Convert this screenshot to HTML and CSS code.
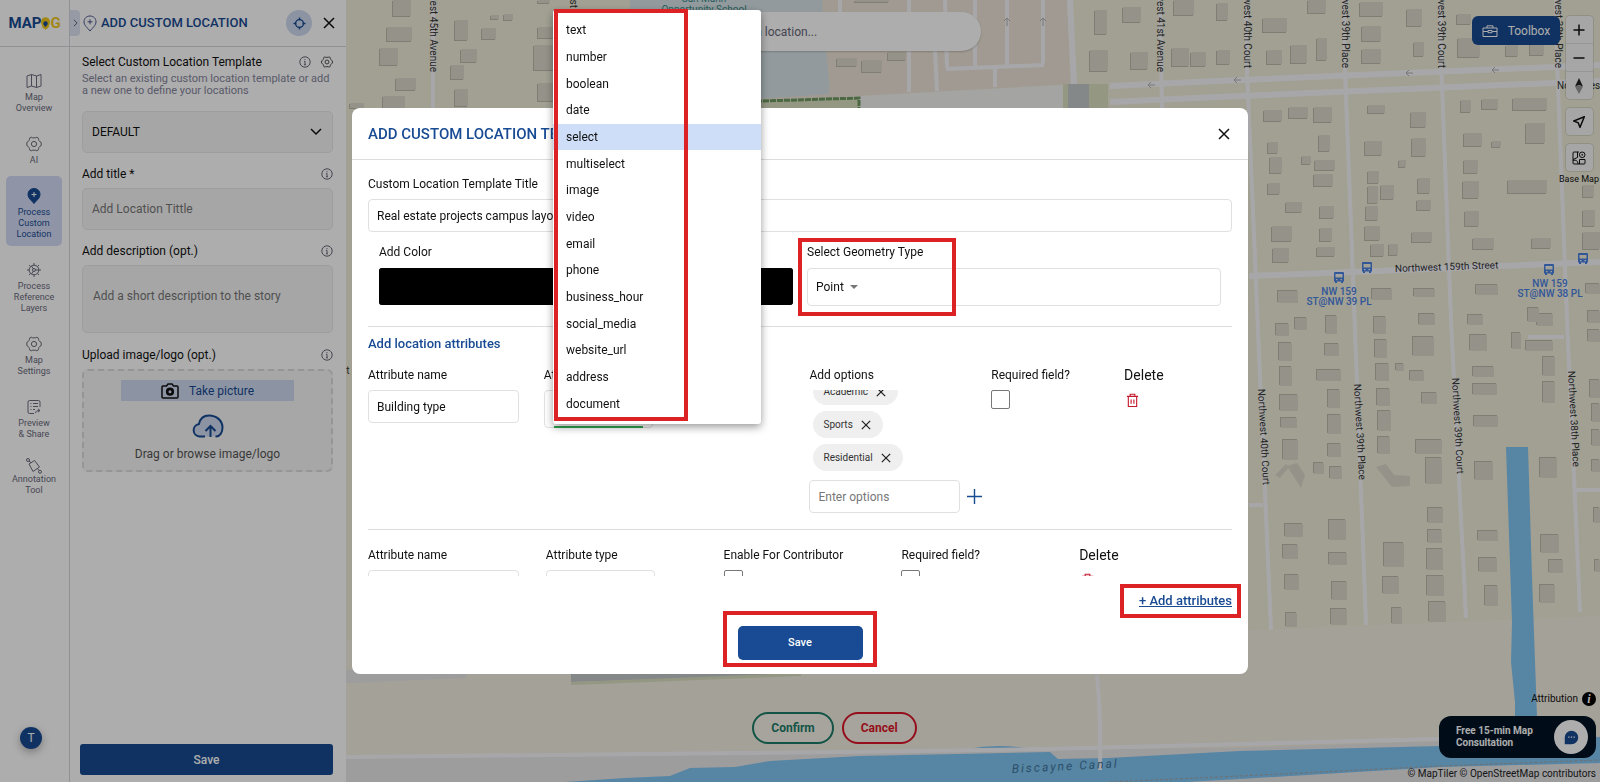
FILE: index.html
```html
<!DOCTYPE html>
<html lang="en">
<head>
  <meta charset="UTF-8">
  <meta name="viewport" content="width=device-width, initial-scale=1.0">
  <title>MAPOG - Add Custom Location</title>
  <link rel="stylesheet" href="styles.css">
</head>
<body>
  <!-- Shared icons -->
  <svg class="sprite" aria-hidden="true">
    <symbol id="i-close" viewBox="0 0 12 12"><path d="M1 1l10 10M11 1L1 11"/></symbol>
    <symbol id="i-info" viewBox="0 0 12 12"><circle cx="6" cy="6" r="5.2"/><path d="M6 5.3v3.4M5 8.8h2M5 5.3h1M6 3v.9"/></symbol>
    <symbol id="i-gear" viewBox="0 0 16 16"><path d="M5.2 1.2c1 .9 4.600.9 5.600 0l1.600.9c-.3 1.500 1.200 3.900 2.800 4.400v3c-1.600.5-3.100 2.900-2.800 4.400l-1.600.9c-1-.9-4.600-.9-5.600 0l-1.600-.9c.3-1.500-1.200-3.900-2.800-4.400v-3c1.600-.5 3.100-2.900 2.800-4.400z"/><circle cx="8" cy="8" r="2.600"/></symbol>
    <symbol id="i-trash" viewBox="0 0 14 16"><path d="M1 3.500h12M4.500 3.500V1.300h5v2.200M2.500 3.500V14.500h9V3.500M5.500 7v4.500M8.500 7v4.500"/></symbol>
    <symbol id="i-bus" viewBox="0 0 10 12"><path d="M1 0h8a1 1 0 0 1 1 1v8.500H9V11H7V9.500H3V11H1V9.500H0V1a1 1 0 0 1 1-1zM1.500 2v3.500h7V2zM2 7v1.200h1.500V7zM6.500 7v1.200H8V7z" fill-rule="evenodd"/></symbol>
  </svg>

  <div class="app">
    <nav class="rail">
      <a class="logo" href="#">MAP<svg viewBox="0 0 10 14"><path class="bulb" d="M5 0a5 5 0 0 1 5 5c0 3-1.500 4-1.500 6.500L5 14l-3.500-2.500C1.500 9 0 8 0 5a5 5 0 0 1 5-5z"/><path class="drop" d="M5 4.500a2.500 2.500 0 0 1 2.500 2.500c0 1.500-1.500 2.500-2.500 4-1-1.500-2.500-2.500-2.500-4A2.500 2.500 0 0 1 5 4.500z"/></svg><span>G</span></a>
      <ul class="rail-list">
        <li><a class="rail-item" href="#">
          <svg class="icon" viewBox="0 0 16 16"><path d="M1 3l4.500-1.500 5 1.500L15 1.500V13l-4.500 1.500-5-1.500L1 14.500zM5.500 1.500V13M10.500 3v11.500"/></svg>
          Map<br>Overview</a></li>
        <li><a class="rail-item" href="#"><svg class="icon"><use href="#i-gear"/></svg>AI</a></li>
        <li><a class="rail-item active" href="#">
          <svg class="icon" viewBox="0 0 16 16"><path class="solid" d="M8 .5c-3.600 0-6 2.600-6 6 0 3.500 3.500 6 6 9 2.500-3 6-5.500 6-9 0-3.400-2.400-6-6-6z"/><path class="plus" d="M8 4v5M5.500 6.500h5"/></svg>
          Process<br>Custom<br>Location</a></li>
        <li><a class="rail-item" href="#">
          <svg class="icon" viewBox="0 0 16 16"><circle cx="8" cy="8" r="4.800"/><circle cx="8" cy="8" r="1.500"/><path d="M8 1v2.200M8 12.800V15M1 8h2.200M9.500 8H15M3 3l1.600 1.600M11.400 11.400L13 13M13 3l-1.600 1.600M4.600 11.400L3 13M7.200 6.700L5.500 4M7.200 9.300L5.500 12"/></svg>
          Process<br>Reference<br>Layers</a></li>
        <li><a class="rail-item" href="#"><svg class="icon"><use href="#i-gear"/></svg>Map<br>Settings</a></li>
        <li><a class="rail-item" href="#">
          <svg class="icon" viewBox="0 0 16 16"><path d="M8 14.500H3.500a1.500 1.500 0 0 1-1.500-1.500V3a1.500 1.500 0 0 1 1.500-1.500h9A1.500 1.500 0 0 1 14 3v5M4.500 4.500h1M7 4.500h5M4.500 7.500h1M7 7.500h5M4.500 10.500h1M7 10.500h2M9.500 14c.5-2 1.500-2.500 4-2.500M12 9.800l2 1.700-2 1.700"/></svg>
          Preview<br>&amp; Share</a></li>
        <li><a class="rail-item tight" href="#">
          <svg class="icon" viewBox="0 0 16 16"><path d="M3 6l5.500-3.500 5 6.500L7 13.500zM3 3.200L5 4.700M11.800 11l1.500 1.500"/><circle cx="2" cy="2" r="1.500"/><circle cx="14" cy="13.800" r="1.500"/></svg>
          Annotation<br>Tool</a></li>
      </ul>
      <button class="avatar" type="button">T</button>
    </nav>

    <aside class="panel">
      <header class="panel-head">
        <button class="collapse" type="button" aria-label="Collapse"><svg viewBox="0 0 6 10"><path d="M1 1l4 4-4 4"/></svg></button>
        <svg class="pin" viewBox="0 0 14 17"><path d="M7 1C3.500 1 1 3.500 1 6.800 1 10.300 4.500 13 7 16c2.500-3 6-5.700 6-9.200C13 3.500 10.500 1 7 1zM7 4.300v5M4.500 6.800h5"/></svg>
        <h2>ADD CUSTOM LOCATION</h2>
        <button class="locate" type="button" aria-label="My location"><svg viewBox="0 0 14 14"><circle cx="7" cy="7" r="4.200"/><path d="M7 .5v3M7 10.500v3M.5 7h3M10.500 7h3"/></svg></button>
        <button class="plain" type="button" aria-label="Close"><svg class="x"><use href="#i-close"/></svg></button>
      </header>
      <form class="panel-body">
        <div class="label-row">
          <label for="template">Select Custom Location Template</label>
          <svg class="info"><use href="#i-info"/></svg>
          <svg class="info gear"><use href="#i-gear"/></svg>
        </div>
        <p class="hint">Select an existing custom location template or add a new one to define your locations</p>
        <div class="select-box">
          <select id="template" class="field"><option>DEFAULT</option></select>
          <svg viewBox="0 0 12 8"><path d="M1 1l5 5 5-5"/></svg>
        </div>
        <div class="label-row">
          <label for="title">Add title *</label>
          <svg class="info"><use href="#i-info"/></svg>
        </div>
        <input id="title" class="field" type="text" placeholder="Add Location Tittle">
        <div class="label-row">
          <label for="desc">Add description (opt.)</label>
          <svg class="info"><use href="#i-info"/></svg>
        </div>
        <textarea id="desc" class="field" placeholder="Add a short description to the story"></textarea>
        <div class="label-row">
          <span>Upload image/logo (opt.)</span>
          <svg class="info"><use href="#i-info"/></svg>
        </div>
        <div class="upload">
          <button class="take" type="button">
            <svg viewBox="0 0 18 16"><path d="M2 3h3.500L7 1h4l1.500 2H16a1 1 0 0 1 1 1v10a1 1 0 0 1-1 1H2a1 1 0 0 1-1-1V4a1 1 0 0 1 1-1z"/><circle cx="9" cy="8.700" r="2.800" stroke-width="2.600"/></svg>
            Take picture
          </button>
          <svg class="cloud" viewBox="0 0 32 24"><path class="puff" d="M13 22.500H7.500a6.300 6.300 0 0 1-.6-12.500C8 5 11.500 1.500 17 1.500c7.500 0 13.500 5 13.500 12 0 5-2.500 9-6.500 9h-.5"/><path d="M18.500 23V12.500M13.500 17l5-5 5 5"/></svg>
          <span>Drag or browse image/logo</span>
        </div>
        <button class="panel-save" type="button">Save</button>
      </form>
    </aside>

    <main class="map">
      <svg class="map-canvas" viewBox="346 0 1254 782" preserveAspectRatio="xMaxYMin slice">
        <rect class="land" x="346" width="1254" height="782"/>
        <!-- land use -->
        <path class="sand" d="M346 640L1200 640L1249 630L1600 616V782H346z"/>
        <path class="lot" d="M740 0h328l2 84-210 12-160 12h-120z"/>
        <path class="school" d="M630 0h192l8 94-200 14z"/>
        <path class="lot" d="M834 14h60v78l-65 3z"/>
        <path class="street-fill" d="M860 96l203-11v40H700v-17z"/>
        <path class="park" d="M700 101l160-4v12H700z"/>
        <path class="hedge" d="M700 103l159-5v10"/>
        <path class="park" d="M1063 84h45v26h-45z"/>
        <path class="bridge" d="M1068 84h21v26h-21z"/>
        <path class="grey" d="M346 670h120v8L346 683z"/>
        <path class="bridge" d="M571 670h200v6l-200 6z"/>
        <path class="park" d="M571 682l230-9v3l-230 9z"/>
        <path class="grey" d="M346 757L1240 748 1600 736V782H346z"/>
        <!-- water -->
        <path class="water" d="M1506 447h22l4 130 5 140v25h-22v-40l-4-40 1-40z"/>
        <path class="water" d="M565 782l60-4 45-2 20-8 45-1 35-6 90-5 190-4 8 7 50-1 132-7 200-5 160-9v26l-160 4-200 12-90 5-20 3-25-5-35 8z"/>
        <path class="water" d="M968 749q30-6 65 0z"/>
        <path class="rail-track" d="M1110 782l130-6 200-10 160-6"/>
        <!-- roads -->
        <g class="roads">
          <path d="M433 0v108M1160 0l2 108M1246 0l1 70 11 260 13 300M1344 0l1 70 10 260 11 295M1440 0l1 60 10 260 15 298M1556 0l1 60 10 260 13 292"/>
          <path class="thick" d="M1070 0l4 84M1110 86l130-6 360-15M1110 102l130-6 360-15M1249 276l351-14"/>
          <path d="M840 0v20M909 0v92M935 50l2 41M945 0l2 68M975 0v66M1007 0v66M1043 0v64M946 69l98-4M995 67v20M1528 337h36M1249 505h14M1575 490h25"/>
          <path d="M346 757l500-5 200-3 550-14M1097 675q4 40 3 95"/>
        </g>
        <path class="arrows" d="M1007 26v-8m-3 3l3-3 3 3M1043 26v-8m-3 3l3-3 3 3M1155 85h-7m3-3l-3 3 3 3M1241 80h-7m3-3l-3 3 3 3M1413 73h-7m3-3l-3 3 3 3M1499 70h-7m3-3l-3 3 3 3"/>
        <g id="buildings"></g>
        <!-- labels -->
        <g class="street-names">
          <text class="end" transform="translate(430 72) rotate(90)">Northwest 45th Avenue</text>
          <text class="end" transform="translate(570 8) rotate(90)">Northwest</text>
          <text class="end" transform="translate(1157 72) rotate(90)">Northwest 41st Avenue</text>
          <text class="end" transform="translate(1244 68) rotate(90)">Northwest 40th Court</text>
          <text class="end" transform="translate(1342 68) rotate(90)">Northwest 39th Place</text>
          <text class="end" transform="translate(1438 68) rotate(90)">Northwest 39th Court</text>
          <text class="end" transform="translate(1555 68) rotate(90)">Northwest 38th Place</text>
          <text transform="translate(1258 389) rotate(87)">Northwest 40th Court</text>
          <text transform="translate(1354 384) rotate(87)">Northwest 39th Place</text>
          <text transform="translate(1452 378) rotate(87)">Northwest 39th Court</text>
          <text transform="translate(1568 371) rotate(87)">Northwest 38th Place</text>
          <text transform="translate(1395 272) rotate(-2)">Northwest 159th Street</text>
          <text x="1557" y="89">Northwest</text>
          <text x="325" y="374">Court</text>
        </g>
        <text class="canal-name" transform="translate(1012 773) rotate(-3)">Biscayne Canal</text>
        <g class="school-name">
          <text x="704" y="2">San Mann</text>
          <text x="704" y="13">Opportunity School</text>
        </g>
        <g class="stops">
          <use href="#i-bus" x="1334" y="272" width="10" height="12"/>
          <use href="#i-bus" x="1362" y="262" width="10" height="12"/>
          <use href="#i-bus" x="1544" y="264" width="10" height="12"/>
          <use href="#i-bus" x="1578" y="253" width="10" height="12"/>
          <text x="1339" y="295">NW 159</text>
          <text x="1339" y="305">ST@NW 39 PL</text>
          <text x="1550" y="287">NW 159</text>
          <text x="1550" y="297">ST@NW 38 PL</text>
        </g>
      </svg>

      <input class="search" type="search" aria-label="Search location" placeholder="Search location...">

      <div class="map-tools">
        <button class="toolbox" type="button">
          <svg viewBox="0 0 16 12"><path d="M1 3h14v8.500H1zM5 3V.8h6V3M1 6.500h5M10 6.500h5M6 5.500h4v2.200H6z"/></svg>
          Toolbox
        </button>
        <div class="map-buttons">
          <div class="btn-group">
            <button type="button" aria-label="Zoom in"><svg viewBox="0 0 12 12"><path d="M6 .5v11M.5 6h11"/></svg></button>
            <button type="button" aria-label="Zoom out"><svg viewBox="0 0 12 12"><path d="M.5 6h11"/></svg></button>
            <button type="button" aria-label="Reset bearing"><svg class="compass" viewBox="0 0 10 16"><path class="north" d="M5 0l4 8.500-4-1.500-4 1.500z"/><path class="south" d="M5 16l4-7.500-4-1.500-4 1.500z"/></svg></button>
          </div>
          <div class="btn-group">
            <button type="button" aria-label="Locate me"><svg viewBox="0 0 12 12"><path d="M11.300.7L.8 5l4.400 1.800L7 11.300z"/></svg></button>
          </div>
          <div class="btn-group">
            <button type="button" aria-label="Base map"><svg class="layers" viewBox="0 0 14 14"><path d="M7 1H2a1 1 0 0 0-1 1v10a1 1 0 0 0 1 1h10a1 1 0 0 0 1-1V8.500M1 8.500l4.500-2V1M1 9.500c3-1 5 .5 5 3.500M7.500 8.500H13M7.500 8.500V13"/><circle cx="10.200" cy="3.800" r="2.800"/><circle cx="10.200" cy="3.800" r=".5"/></svg></button>
          </div>
          <span class="base-label">Base Map</span>
        </div>
      </div>

      <div class="map-actions">
        <button class="confirm" type="button">Confirm</button>
        <button class="cancel" type="button">Cancel</button>
      </div>

      <div class="map-corner">
        <div class="attribution">Attribution <span class="i-badge">i</span></div>
        <button class="consult" type="button">
          <span>Free 15-min Map Consultation</span>
          <span class="chat"><svg viewBox="0 0 16 16"><path d="M8 .8a7.200 7.200 0 1 1 0 14.400H.8V8A7.200 7.200 0 0 1 8 .8z"/><path class="dots" d="M4.500 7.500h1.400M7.300 7.500h1.400M10.100 7.500h1.400"/></svg></span>
        </button>
        <div class="copyright"><a href="#">© MapTiler</a> <a href="#">© OpenStreetMap contributors</a></div>
      </div>
    </main>
  </div>

  <div class="backdrop">
    <section class="dialog" role="dialog" aria-labelledby="dialog-title">
      <header class="dialog-head">
        <h1 id="dialog-title">ADD CUSTOM LOCATION TEMPLATE</h1>
        <button class="plain" type="button" aria-label="Close"><svg class="x"><use href="#i-close"/></svg></button>
      </header>

      <div class="dialog-scroll">
        <label for="tpl-title">Custom Location Template Title</label>
        <input id="tpl-title" class="text-input wide" type="text" value="Real estate projects campus layout">

        <div class="pair">
          <div>
            <label for="color">Add Color</label>
            <input id="color" type="color" value="#000000">
          </div>
          <div class="marked">
            <label for="geometry">Select Geometry Type</label>
            <div class="geometry-box">
              <select id="geometry"><option>Point</option></select>
              <svg viewBox="0 0 8 4"><path d="M0 0h8L4 4z"/></svg>
            </div>
            <span class="mark mark-geometry"></span>
          </div>
        </div>

        <h3>Add location attributes</h3>
        <div class="attr attr-select">
          <div>
            <label for="name1">Attribute name</label>
            <input id="name1" class="text-input" type="text" value="Building type">
          </div>
          <div>
            <label for="type1">Attribute type</label>
            <div class="type-box open"><select id="type1"><option>select</option></select></div>
          </div>
          <div>
            <label for="opt1">Add options</label>
            <div class="chips">
              <span class="chip">Academic <button type="button" aria-label="Remove Academic"><svg><use href="#i-close"/></svg></button></span>
              <span class="chip">Sports <button type="button" aria-label="Remove Sports"><svg><use href="#i-close"/></svg></button></span>
              <span class="chip">Residential <button type="button" aria-label="Remove Residential"><svg><use href="#i-close"/></svg></button></span>
            </div>
            <div class="add-option">
              <input id="opt1" class="text-input" type="text" placeholder="Enter options">
              <button type="button" aria-label="Add option"><svg viewBox="0 0 16 16"><path d="M8 0v16M0 8h16"/></svg></button>
            </div>
          </div>
          <div>
            <label for="req1">Required field?</label>
            <input id="req1" type="checkbox">
          </div>
          <div>
            <span class="delete-label">Delete</span>
            <button class="trash" type="button" aria-label="Delete attribute"><svg><use href="#i-trash"/></svg></button>
          </div>
        </div>

        <div class="attr attr-plain">
          <div>
            <label for="name2">Attribute name</label>
            <input id="name2" class="text-input" type="text">
          </div>
          <div>
            <label for="type2">Attribute type</label>
            <div class="type-box"><select id="type2"><option>text</option></select></div>
          </div>
          <div>
            <label for="contrib2">Enable For Contributor</label>
            <input id="contrib2" type="checkbox">
          </div>
          <div>
            <label for="req2">Required field?</label>
            <input id="req2" type="checkbox">
          </div>
          <div>
            <span class="delete-label">Delete</span>
            <button class="trash" type="button" aria-label="Delete attribute"><svg><use href="#i-trash"/></svg></button>
          </div>
        </div>
      </div>

      <footer class="dialog-foot">
        <span class="marked add-more"><a href="#">+ Add attributes</a><span class="mark mark-add"></span></span>
        <span class="marked"><button class="dialog-save" type="button">Save</button><span class="mark mark-save"></span></span>
      </footer>

      <!-- Open attribute type menu -->
      <div class="menu">
        <ul role="listbox" aria-label="Attribute type">
          <li role="option">text</li>
          <li role="option">number</li>
          <li role="option">boolean</li>
          <li role="option">date</li>
          <li role="option" aria-selected="true">select</li>
          <li role="option">multiselect</li>
          <li role="option">image</li>
          <li role="option">video</li>
          <li role="option">email</li>
          <li role="option">phone</li>
          <li role="option">business_hour</li>
          <li role="option">social_media</li>
          <li role="option">website_url</li>
          <li role="option">address</li>
          <li role="option">document</li>
        </ul>
        <span class="mark mark-menu"></span>
      </div>
    </section>
  </div>

  <script src="map.js"></script>
</body>
</html>
```
FILE: map.js
```js
// Building footprints: [x, y, width, height]
const north = [
  [393,0,18,16],[387,27,25,14],[380,48,18,17],[396,78,20,12],[383,96,22,12],[455,20,13,20],[482,28,14,11],[451,65,13,14],[461,49,16,13],
  [534,45,22,25],[538,27,18,11],[538,83,16,18],[455,89,13,17],[504,14,9,6],[491,15,8,4],[350,103,14,5],[538,0,12,3],
  [1095,10,12,24],[1123,7,18,15],[1090,50,18,21],[1131,52,17,17],[1172,48,17,18],[1191,52,15,14],[1174,0,20,15],[1217,3,11,17],[1217,50,13,14],
  [837,58,20,8],[862,60,20,12],[888,52,18,8],[855,0,34,2],
  [1308,0,18,13],[1263,18,24,14],[1267,50,15,14],[1291,45,16,18],[1317,38,10,22],[1360,2,23,14],[1362,26,19,15],[1362,49,19,14],
  [1407,9,15,17],[1414,42,10,14],[1458,38,22,19],[1457,14,14,10],[1506,45,12,11],[1530,44,14,11],[1264,110,18,11],[1289,107,19,11],
  [1314,107,18,15],[1268,142,10,11],[1270,157,12,16],[1319,135,11,16],[1302,156,9,8],[1315,160,20,10],[1314,174,19,12],[1268,183,12,11],
  [1286,202,16,10],[1320,206,14,12],[1272,226,20,15],[1320,228,12,13],[1273,248,16,14],[1317,247,18,9],[1368,105,17,8],[1411,112,15,15],
  [1365,141,17,14],[1412,138,14,18],[1399,160,7,7],[1368,171,11,12],[1368,186,10,17],[1381,185,13,14],[1418,178,12,15],[1366,206,12,14],
  [1417,200,14,10],[1365,226,15,14],[1412,232,20,10],[1371,244,13,12],[1389,244,9,11],[1461,100,10,12],[1482,99,16,10],[1513,98,34,12],
  [1526,123,19,20],[1464,133,18,13],[1492,141,9,6],[1464,160,14,13],[1463,181,16,17],[1508,180,39,13],[1465,211,14,15],[1473,238,21,11],
  [1532,238,19,10],[1583,185,11,12],[1583,210,12,16],[1583,232,17,17]
];
const south = [
  [1278,291,20,12],[1372,289,20,11],[1414,289,21,8],[1476,285,22,10],[1586,284,14,10],[1276,324,13,12],[1295,318,12,12],[1326,316,11,18],
  [1374,317,12,17],[1419,314,16,11],[1468,315,15,10],[1528,308,11,14],[1537,314,16,12],[1279,343,13,18],[1325,344,14,12],[1375,340,12,18],
  [1413,337,21,19],[1470,335,17,16],[1512,333,9,16],[1526,341,27,10],[1280,367,12,19],[1317,370,24,11],[1376,364,13,17],[1396,364,8,7],
  [1410,371,14,10],[1473,367,21,10],[1543,357,12,19],[1280,395,18,16],[1328,390,12,18],[1377,389,13,17],[1422,393,15,11],[1473,384,24,11],
  [1543,382,12,21],[1281,418,16,10],[1328,415,13,19],[1378,411,13,20],[1474,416,24,11],[1283,440,15,20],[1328,444,13,13],[1378,437,12,17],
  [1416,440,26,14],[1426,458,16,26],[1475,462,18,18],[1540,458,17,20],[1314,463,10,11],[1330,467,12,12],
  [1588,311,12,12],[1588,330,12,12],[1590,380,10,18],[1592,404,8,18],[1592,430,8,16],[1592,460,8,12],
  [1285,524,18,13],[1329,520,17,20],[1283,545,15,14],[1329,553,18,12],[1285,575,14,15],[1332,582,15,18],[1331,609,16,16],[1286,613,11,14],
  [1384,543,20,24],[1383,577,16,17],[1392,608,10,16],[1428,508,15,15],[1428,530,14,13],[1427,549,16,21],[1427,576,17,20],[1429,602,17,20],
  [1478,531,20,10],[1479,558,18,14],[1485,586,13,20],[1541,535,18,18],[1549,560,14,13],[1540,585,15,18],[1594,508,6,15],[1595,560,5,12]
];
// Houses that stand at an angle to the street
const angled = 'M1275 475l11-11 3 3-9 11zM1287 466l10-3 8 12-4 13zM1376 467l10-3 8 11 16 1v10l-18 1z';

function outline(list, dx, dy) {
  return list.map(([x, y, w, h]) => `M${x + dx} ${y + dy}h${w}v${h}h${-w}z`).join('');
}

// Shadows fall down in the north blocks and up in the south blocks
document.getElementById('buildings').innerHTML =
  `<path class="shadow" d="${outline(north, -1, 1)}${outline(south, -1, -1)}"/>` +
  `<path class="building" d="${outline(north, 0, 0)}${outline(south, 0, 0)}${angled}"/>`;
```
FILE: styles.css
```css
* {
  box-sizing: border-box;
}
body {
  margin: 0;
  font-family: Roboto, "Liberation Sans", sans-serif;
  font-size: 12px;
  line-height: 16px;
  color: #111;
}
button, input, select, textarea {
  font: inherit;
  color: inherit;
}
button {
  border: 0;
  padding: 0;
  background: none;
  cursor: pointer;
}
svg {
  display: block;
  fill: none;
  stroke: currentColor;
}
text {
  stroke: none;
}
h1, h2, h3, p, ul {
  margin: 0;
  padding: 0;
}
ul {
  list-style: none;
}
a {
  color: inherit;
  text-decoration: none;
}
.sprite {
  position: absolute;
  width: 0;
  height: 0;
}
.app {
  display: flex;
  height: 100vh;
  overflow: hidden;
}

/* Left rail */
.rail {
  display: flex;
  flex-direction: column;
  width: 70px;
  border-right: 1px solid #d5d5dc;
  background: #fff;
}
.logo {
  display: flex;
  align-items: center;
  justify-content: center;
  height: 47px;
  border-bottom: 1px solid #d5d5dc;
  font-size: 15px;
  font-weight: 700;
  color: #184b93;
}
.logo span {
  color: #f0c81e;
}
.logo svg {
  width: 9px;
  height: 13px;
  stroke: none;
}
.bulb {
  fill: #f0c81e;
}
.drop {
  fill: #184b93;
}
.rail-list {
  display: flex;
  flex-direction: column;
  gap: 4px;
  padding: 14px 7px 0 6px;
}
.rail-item {
  display: flex;
  flex-direction: column;
  align-items: center;
  padding: 12px 0 6px;
  border-radius: 5px;
  font-size: 9px;
  line-height: 11px;
  text-align: center;
  color: #6a6a7c;
}
.rail-item .icon {
  width: 16px;
  height: 16px;
  margin-bottom: 3px;
}
.rail-item.tight {
  padding-top: 8px;
}
.rail-item.tight .icon {
  margin-bottom: 0;
}
.rail-item.active {
  background: #d3dbf5;
  color: #184b93;
}
.solid {
  fill: #184b93;
}
.plus {
  stroke: #fff;
}
.avatar {
  width: 22px;
  height: 22px;
  margin: auto 0 33px 20px;
  border-radius: 50%;
  background: #184b93;
  box-shadow: 0 3px 8px rgba(0, 0, 0, 0.3);
  color: #fff;
}

/* Location panel */
.panel {
  display: flex;
  flex-direction: column;
  width: 276px;
  background: #fff;
}
.panel-head {
  display: flex;
  align-items: center;
  height: 47px;
  padding-right: 11px;
  border-bottom: 1px solid #d5d5dc;
}
.panel-head h2 {
  flex: 1;
  margin-left: 4px;
  font-size: 13px;
  font-weight: 500;
  color: #184b93;
}
.collapse {
  display: flex;
  align-items: center;
  justify-content: center;
  width: 10px;
  height: 26px;
  border-radius: 0 4px 4px 0;
  background: #dde4f3;
  color: #445;
}
.collapse svg {
  width: 5px;
  height: 8px;
}
.pin {
  width: 14px;
  height: 17px;
  margin-left: 3px;
  color: #4a5590;
}
.locate {
  display: flex;
  align-items: center;
  justify-content: center;
  width: 26px;
  height: 26px;
  margin-right: 11px;
  border-radius: 50%;
  background: #cfdaf0;
  color: #184b93;
}
.locate svg {
  width: 13px;
  height: 13px;
  stroke-width: 1.5px;
}
.x {
  width: 12px;
  height: 12px;
  stroke-width: 1.5px;
}
.panel-body {
  display: flex;
  flex: 1;
  flex-direction: column;
  padding: 7px 13px 7px 12px;
}
.label-row {
  display: flex;
  align-items: center;
  gap: 10px;
  margin-bottom: 6px;
}
.label-row > :first-child {
  flex: 1;
}
.info {
  width: 12px;
  height: 12px;
  color: #667;
}
.gear {
  color: #222;
}
.hint {
  margin: -3px 0 14px;
  font-size: 11px;
  line-height: 12px;
  color: #85859c;
}
.field {
  flex-shrink: 0;
  width: 100%;
  height: 42px;
  margin-bottom: 13px;
  padding: 0 9px;
  border: 1px solid #e8e8e8;
  border-radius: 5px;
  background: #f5f5f5;
  appearance: none;
}
.field::placeholder {
  color: #777;
  opacity: 1;
}
textarea.field {
  height: 68px;
  margin-bottom: 14px;
  padding: 22px 10px;
  resize: none;
}
.select-box {
  position: relative;
}
.select-box svg {
  position: absolute;
  top: 17px;
  right: 11px;
  width: 12px;
  height: 8px;
  stroke-width: 1.5px;
  pointer-events: none;
}
.upload {
  display: flex;
  flex-direction: column;
  align-items: center;
  height: 103px;
  padding-top: 9px;
  border: 2px dashed #dcdcdc;
  border-radius: 6px;
  background: #f7f7f7;
  color: #555;
}
.take {
  display: flex;
  align-items: center;
  justify-content: center;
  gap: 10px;
  width: 70%;
  height: 21px;
  background: #cfdaf0;
  color: #184b93;
}
.take svg {
  width: 18px;
  height: 16px;
  stroke: #111;
  stroke-width: 1.5px;
}
.cloud {
  width: 32px;
  height: 24px;
  margin: 13px 0 8px;
  stroke: #184b93;
  stroke-width: 2px;
}
.puff {
  fill: #cfdaf0;
}
.panel-save {
  height: 31px;
  margin: auto 0 0 -2px;
  border-radius: 3px;
  background: #184b93;
  font-weight: 500;
  color: #fff;
}

/* Map */
.map {
  position: relative;
  flex: 1;
  min-width: 0;
}
.map-canvas {
  width: 100%;
  height: 100%;
}
.map-canvas path, .map-canvas rect, .stops {
  stroke: none;
}
.land { fill: #edecd8; }
.sand { fill: #f2ede0; }
.lot { fill: #ece4d7; }
.school { fill: #d8e4e8; }
.street-fill { fill: #f2f2f1; }
.park { fill: #dae0c2; }
.bridge { fill: #c4c9cb; }
.grey { fill: #e7e7e9; }
.water { fill: #80c4f2; }
.building { fill: #dcd9ca; }
.shadow { fill: #bdb9ac; }
.map-canvas .hedge {
  stroke: #6f9a62;
  stroke-width: 3px;
  stroke-dasharray: 6 1;
}
.map-canvas .rail-track {
  stroke: #a5a5a5;
  stroke-dasharray: 3 2;
}
.map-canvas .roads path {
  stroke: #f7f7fb;
  stroke-width: 4px;
}
.map-canvas .roads .thick {
  stroke-width: 6px;
}
.map-canvas .arrows {
  stroke: #b0b0b0;
}
.street-names {
  fill: #333;
  font-size: 10px;
}
.street-names .end {
  text-anchor: end;
}
.canal-name {
  fill: #41749a;
  font-size: 12px;
  font-style: italic;
  letter-spacing: 2px;
}
.school-name {
  fill: #3a8c88;
  font-size: 10px;
  text-anchor: middle;
}
.stops {
  fill: #4a80e0;
  font-size: 10px;
  font-weight: 500;
  text-anchor: middle;
}
.search {
  position: absolute;
  top: 12px;
  left: 24%;
  width: 334px;
  height: 39px;
  padding: 0 20px 0 78px;
  border: 0;
  border-radius: 20px;
  background: #fff;
  box-shadow: 0 1px 2px rgba(0, 0, 0, 0.2);
}
.search::placeholder {
  color: #667;
  opacity: 1;
}
.map-tools {
  position: absolute;
  top: 16px;
  right: 2px;
  display: flex;
  align-items: flex-start;
}
.toolbox {
  display: flex;
  align-items: center;
  justify-content: center;
  gap: 10px;
  width: 88px;
  height: 29px;
  border-radius: 6px;
  background: #184b93;
  color: #fff;
}
.toolbox svg {
  width: 16px;
  height: 12px;
}
.map-buttons {
  display: flex;
  flex-direction: column;
  align-items: center;
  gap: 9px;
  width: 38px;
}
.btn-group {
  width: 27px;
  border-radius: 4px;
  background: #f5f5f5;
  box-shadow: 0 0 0 1px rgba(0, 0, 0, 0.1);
}
.btn-group button {
  display: flex;
  align-items: center;
  justify-content: center;
  width: 27px;
  height: 27px;
}
.btn-group button + button {
  height: 28px;
  border-top: 1px solid #ddd;
}
.btn-group svg {
  width: 12px;
  height: 12px;
  stroke-width: 1.5px;
}
.btn-group .compass {
  width: 10px;
  height: 16px;
}
.btn-group .layers {
  width: 14px;
  height: 14px;
  stroke-width: 1px;
}
.btn-group .north {
  fill: #222;
  stroke: none;
}
.btn-group .south {
  fill: #999;
  stroke: none;
}
.base-label {
  margin-top: -9px;
  font-size: 9px;
  white-space: nowrap;
}
.map-actions {
  position: absolute;
  bottom: 38px;
  left: 0;
  right: 0;
  display: flex;
  justify-content: center;
  gap: 8px;
  padding-right: 277px;
}
.map-actions button {
  height: 32px;
  padding: 0 17px;
  border: 2px solid;
  border-radius: 16px;
  background: rgba(255, 255, 255, 0.3);
  font-weight: 700;
}
.map-actions .confirm {
  border-color: #1b7c68;
  color: #1b7c68;
}
.map-actions .cancel {
  border-color: #dc1628;
  color: #dc1628;
}
.map-corner {
  position: absolute;
  right: 4px;
  bottom: 0;
  display: flex;
  flex-direction: column;
  align-items: flex-end;
}
.attribution {
  display: flex;
  align-items: center;
  gap: 4px;
  font-size: 10px;
}
.i-badge {
  width: 14px;
  height: 14px;
  border-radius: 50%;
  background: #000;
  font-family: "Liberation Serif", serif;
  font-size: 12px;
  font-style: italic;
  font-weight: 700;
  line-height: 14px;
  text-align: center;
  color: #fff;
}
.consult {
  display: flex;
  align-items: center;
  justify-content: space-between;
  width: 157px;
  height: 42px;
  margin: 9px 0 0;
  padding: 0 8px 0 17px;
  border-radius: 12px;
  background: #001426;
  font-size: 10px;
  font-weight: 700;
  line-height: 12px;
  text-align: left;
  color: #fff;
}
.chat {
  flex: none;
  display: flex;
  align-items: center;
  justify-content: center;
  width: 34px;
  height: 34px;
  border-radius: 50%;
  background: #fff;
}
.chat svg {
  width: 15px;
  height: 15px;
  fill: #184b93;
  stroke: none;
}
.chat .dots {
  stroke: #fff;
  stroke-width: 1.4px;
}
.copyright {
  height: 24px;
  padding-top: 8px;
  font-size: 10px;
  color: #222;
}

/* Dialog */
.backdrop {
  position: fixed;
  inset: 0;
  display: flex;
  align-items: center;
  justify-content: center;
  background: rgba(0, 0, 0, 0.32);
}
.dialog {
  position: relative;
  width: 56vw;
  min-width: 800px;
  border-radius: 8px;
  background: #fff;
}
.dialog-head {
  display: flex;
  align-items: center;
  justify-content: space-between;
  height: 52px;
  padding: 0 18px 0 16px;
  border-bottom: 1px solid #ddd;
}
.dialog-head h1 {
  font-size: 15px;
  font-weight: 500;
  color: #184b93;
}
.dialog-scroll {
  height: 416px;
  padding: 16px 16px 0;
  overflow: hidden;
}
.dialog-scroll label {
  display: block;
}
.text-input {
  display: block;
  width: 151px;
  height: 33px;
  padding: 0 8px;
  border: 1px solid #e0e0e0;
  border-radius: 4px;
  background: #fff;
}
.text-input::placeholder {
  color: #777;
  opacity: 1;
}
.text-input.wide {
  width: 100%;
  margin-top: 7px;
}
.pair {
  display: grid;
  grid-template-columns: 1fr 1fr;
  gap: 14px;
  padding: 12px 11px 20px;
  border-bottom: 1px solid #ddd;
}
.pair label {
  margin-bottom: 8px;
}
input[type="color"] {
  display: block;
  width: 100%;
  height: 37px;
  padding: 0;
  border: 0;
  border-radius: 3px;
  background: #000;
}
input[type="color"]::-webkit-color-swatch-wrapper {
  padding: 0;
}
input[type="color"]::-webkit-color-swatch {
  border: 0;
  border-radius: 3px;
}
.geometry-box {
  display: flex;
  align-items: center;
  height: 38px;
  padding-left: 8px;
  border: 1px solid #e0e0e0;
  border-radius: 4px;
}
.geometry-box select, .type-box select {
  border: 0;
  background: none;
  appearance: none;
}
.geometry-box svg {
  width: 8px;
  height: 4px;
  margin-left: 6px;
  fill: #777;
  stroke: none;
}
h3 {
  padding: 8px 0 15px;
  font-size: 13px;
  font-weight: 500;
  line-height: 17px;
  color: #184b93;
}
.attr {
  display: grid;
}
.attr label, .delete-label {
  display: block;
  height: 16px;
  margin-bottom: 7px;
}
.attr-select {
  grid-template-columns: 176fr 266fr 182fr 133fr 108fr;
  padding-bottom: 16px;
  border-bottom: 1px solid #ddd;
}
.attr-plain {
  grid-template-columns: 178fr 178fr 178fr 178fr 153fr;
  padding-top: 17px;
}
.delete-label {
  font-size: 14px;
}
.type-box {
  display: flex;
  align-items: center;
  width: 109px;
  height: 33px;
  padding: 0 9px;
  border: 1px solid #e0e0e0;
  border-radius: 4px;
}
.type-box.open {
  height: 38px;
}
.type-box.open select {
  width: 90px;
  height: 38px;
  border-bottom: 2px solid #2ea44f;
}
.chips {
  display: flex;
  flex-direction: column;
  align-items: flex-start;
  justify-content: flex-end;
  gap: 6px;
  height: 81px;
  margin-bottom: 9px;
  padding-left: 4px;
  overflow: hidden;
}
.chip {
  display: flex;
  flex: none;
  align-items: center;
  gap: 8px;
  height: 27px;
  padding: 0 12px 0 10px;
  border-radius: 14px;
  background: #efefef;
  font-size: 10px;
  color: #333;
}
.chip svg {
  width: 10px;
  height: 10px;
  color: #222;
  stroke-width: 1.5px;
}
.add-option {
  display: flex;
  align-items: center;
  gap: 7px;
}
.add-option svg {
  width: 15px;
  height: 15px;
  color: #184b93;
  stroke-width: 1.5px;
}
input[type="checkbox"] {
  display: block;
  width: 19px;
  height: 19px;
  margin: 0;
  border: 1px solid #777;
  border-radius: 2px;
  background: #fff;
  appearance: none;
}
.trash {
  display: block;
  margin: 0 2px;
  padding-top: 3px;
}
.trash svg {
  width: 13px;
  height: 15px;
  color: #c4182c;
  stroke-width: 1.2px;
}
.dialog-foot {
  display: flex;
  flex-direction: column;
  align-items: center;
  padding: 16px 16px 14px;
}
.add-more {
  align-self: flex-end;
  margin-bottom: 16px;
  font-size: 13px;
  font-weight: 500;
  line-height: 18px;
}
.add-more a {
  color: #184b93;
  text-decoration: underline;
}
.dialog-save {
  display: block;
  width: 125px;
  height: 34px;
  border-radius: 5px;
  background: #184b93;
  font-size: 11px;
  font-weight: 500;
  color: #fff;
}

/* Menu over the dialog */
.menu {
  position: absolute;
  top: -98px;
  left: 201px;
  width: 208px;
  height: 414px;
  padding: 7px 0;
  border-radius: 3px;
  background: #fff;
  box-shadow: 0 3px 8px rgba(0, 0, 0, 0.4);
}
.menu ul {
  display: flex;
  flex-direction: column;
  height: 100%;
}
.menu li {
  display: flex;
  flex: 1;
  align-items: center;
  padding-left: 13px;
}
.menu li[aria-selected="true"] {
  background: #cfdef8;
}

/* Red highlight frames */
.marked {
  position: relative;
}
.mark {
  position: absolute;
  border: 4px solid #dc2224;
  pointer-events: none;
}
.mark-menu {
  top: -1px;
  left: 1px;
  width: 134px;
  height: 412px;
}
.mark-geometry {
  top: -6px;
  left: -9px;
  width: 158px;
  height: 78px;
}
.mark-add {
  inset: -8px -9px -8px -19px;
}
.mark-save {
  inset: -15px -14px -7px -15px;
}
```
